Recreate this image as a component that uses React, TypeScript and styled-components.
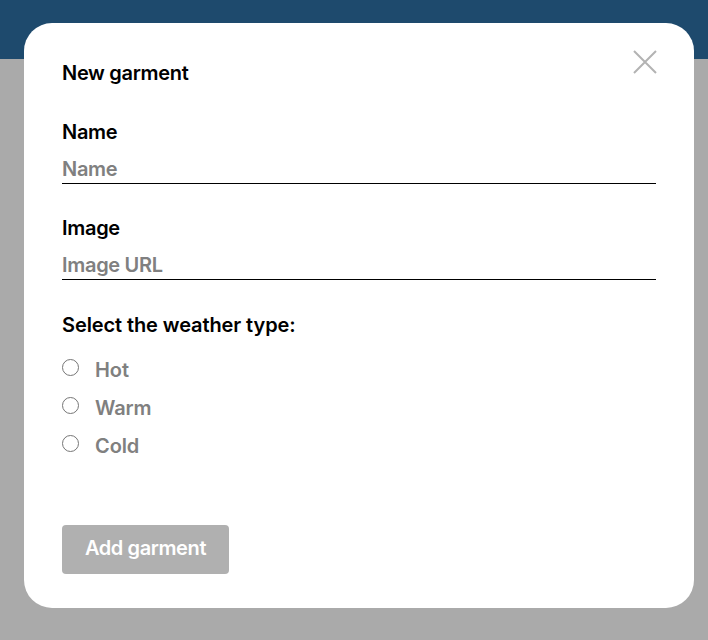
import React from "react";
import styled, { createGlobalStyle } from "styled-components";

const Global = createGlobalStyle`
  html, body { margin: 0; padding: 0; }
  body { font-family: "Inter", "Liberation Sans", sans-serif; background: #aaaaaa; }
  * { box-sizing: border-box; }
`;

const Page = styled.div`
  width: 708px;
  height: 640px;
  position: relative;
  background: #aaaaaa;
  overflow: hidden;
`;

const Header = styled.header`
  height: 59px;
  background: #1e4a6d;
`;

const Overlay = styled.div`
  position: absolute;
  inset: 0;
  padding: 23px 14px 0 24px;
`;

const Modal = styled.form`
  position: relative;
  width: 670px;
  height: 585px;
  background: #ffffff;
  border-radius: 28px;
  padding: 38px 38px 34px 38px;
  display: flex;
  flex-direction: column;
`;

const Close = styled.button`
  position: absolute;
  top: 26px;
  right: 36px;
  width: 26px;
  height: 26px;
  padding: 0;
  border: none;
  background: none;
  cursor: pointer;
  display: flex;
  align-items: center;
  justify-content: center;
`;

const Title = styled.h2`
  margin: 0;
  font-size: 20px;
  line-height: 24px;
  font-weight: 600;
  color: #000;
  letter-spacing: -0.3px;
`;

const Field = styled.label<{ $top: number }>`
  display: flex;
  flex-direction: column;
  flex-shrink: 0;
  margin-top: ${(p) => p.$top}px;
`;

const Label = styled.span`
  font-size: 20px;
  line-height: 24px;
  font-weight: 600;
  color: #000;
  letter-spacing: -0.3px;
`;

const Input = styled.input`
  margin-top: 13px;
  width: 594px;
  height: 27px;
  border: none;
  border-bottom: 1px solid #000;
  padding: 0 0 2px 0;
  font-family: inherit;
  font-size: 20px;
  line-height: 24px;
  font-weight: 600;
  letter-spacing: -0.3px;
  outline: none;
  background: transparent;
  &::placeholder { color: #808080; }
`;

const Legend = styled.p`
  margin: 33px 0 0 0;
  font-size: 20px;
  line-height: 24px;
  font-weight: 600;
  color: #000;
  letter-spacing: -0.1px;
`;

const Options = styled.div`
  display: flex;
  flex-direction: column;
  gap: 14px;
  margin-top: 19px;
`;

const Option = styled.label`
  display: flex;
  align-items: center;
  height: 24px;
  cursor: pointer;
`;

const Radio = styled.input`
  appearance: none;
  margin: -1px 16px 0 0;
  width: 17px;
  height: 17px;
  border: 1px solid #767676;
  border-radius: 50%;
  background: #fff;
`;

const OptionText = styled.span`
  padding-top: 4px;
  font-size: 20px;
  line-height: 24px;
  font-weight: 600;
  color: #808080;
  letter-spacing: -0.1px;
`;

const Submit = styled.button`
  flex-shrink: 0;
  margin-top: 69px;
  width: 167px;
  height: 49px;
  padding: 0 0 3px 0;
  border: none;
  border-radius: 4px;
  background: #b0b0b0;
  color: #ffffff;
  font-family: inherit;
  font-size: 20px;
  font-weight: 600;
  letter-spacing: -0.4px;
`;

export default function App() {
  return (
    <Page>
      <Global />
      <Header />
      <Overlay>
        <Modal onSubmit={(e) => e.preventDefault()}>
          <Close type="button" aria-label="Close">
            <svg width="24" height="24" viewBox="0 0 24 24">
              <path d="M1 1 L23 23 M23 1 L1 23" stroke="#b3b3b3" strokeWidth="2" />
            </svg>
          </Close>
          <Title>New garment</Title>
          <Field $top={35}>
            <Label>Name</Label>
            <Input placeholder="Name" />
          </Field>
          <Field $top={32}>
            <Label>Image</Label>
            <Input placeholder="Image URL" />
          </Field>
          <Legend>Select the weather type:</Legend>
          <Options>
            <Option>
              <Radio type="radio" name="weather" value="hot" />
              <OptionText>Hot</OptionText>
            </Option>
            <Option>
              <Radio type="radio" name="weather" value="warm" />
              <OptionText>Warm</OptionText>
            </Option>
            <Option>
              <Radio type="radio" name="weather" value="cold" />
              <OptionText>Cold</OptionText>
            </Option>
          </Options>
          <Submit type="submit" disabled>Add garment</Submit>
        </Modal>
      </Overlay>
    </Page>
  );
}
